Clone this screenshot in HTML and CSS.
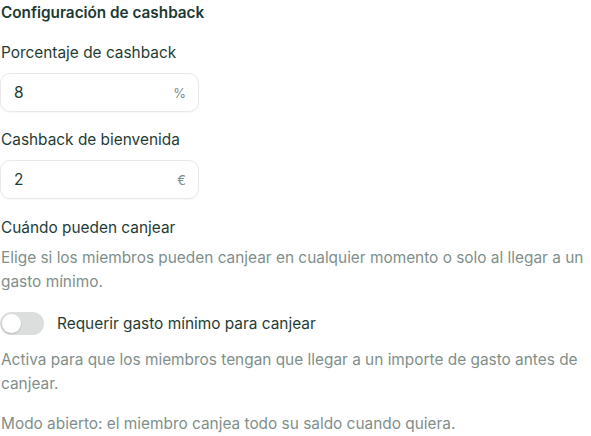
FILE: index.html
```html
<!DOCTYPE html>
<html lang="es">
<head>
<meta charset="utf-8">
<link rel="stylesheet" href="styles.css">
</head>
<body>
<div class="panel">
  <h2 class="title">Configuración de cashback</h2>
  <div class="field">
    <label class="label">Porcentaje de cashback</label>
    <div class="input"><span class="value">8</span><span class="suffix">%</span></div>
  </div>
  <div class="field">
    <label class="label">Cashback de bienvenida</label>
    <div class="input"><span class="value">2</span><span class="suffix">€</span></div>
  </div>
  <div class="section">
    <div class="label">Cuándo pueden canjear</div>
    <p class="desc">Elige si los miembros pueden canjear en cualquier momento o solo al llegar a un gasto mínimo.</p>
    <div class="toggle-row">
      <span class="toggle"><span class="knob"></span></span>
      <span class="toggle-label">Requerir gasto mínimo para canjear</span>
    </div>
    <p class="desc after-toggle">Activa para que los miembros tengan que llegar a un importe de gasto antes de canjear.</p>
    <p class="desc note">Modo abierto: el miembro canjea todo su saldo cuando quiera.</p>
  </div>
</div>
</body>
</html>
```
FILE: styles.css
```css
html, body {
  margin: 0;
  padding: 0;
  background: #ffffff;
}
body {
  font-family: Inter, "Noto Sans", sans-serif;
  color: #1f3d36;
  font-size: 15.4px;
}
.panel {
  width: 591px;
  padding: 0 0 0 1px;
  box-sizing: border-box;
}
.title {
  margin: 0;
  padding-top: 3px;
  font-size: 15.3px;
  font-weight: 600;
  line-height: 20px;
  color: #1c3a33;
}
.field {
  display: flex;
  flex-direction: column;
}
.label {
  display: block;
  font-size: 15.4px;
  line-height: 20px;
  color: #1f3d36;
}
.field .label {
  margin-top: 18px;
  margin-bottom: 10px;
}
.field:first-of-type .label {
  margin-top: 20px;
}
.input {
  width: 199px;
  height: 39px;
  box-sizing: border-box;
  margin-left: -1px;
  border: 1px solid #e6e9e8;
  border-radius: 10px;
  display: flex;
  align-items: center;
  justify-content: space-between;
  padding: 0 12px 0 13px;
  box-shadow: 0 1px 2px rgba(0,0,0,0.04);
}
.value {
  font-size: 15.4px;
  color: #1f3d36;
}
.suffix {
  font-size: 13px;
  color: #7d8c88;
}
.section {
  margin-top: 19px;
}
.desc {
  margin: 8px 0 0;
  font-size: 15.4px;
  line-height: 24px;
  color: #7f8f8b;
}
.toggle-row {
  display: flex;
  align-items: center;
  gap: 13px;
  margin-top: 18px;
  margin-left: -1px;
}
.toggle {
  width: 44px;
  height: 23px;
  border-radius: 12px;
  background: #dcdedd;
  position: relative;
  flex: none;
}
.knob {
  position: absolute;
  left: 2px;
  top: 2px;
  width: 19px;
  height: 19px;
  border-radius: 50%;
  background: #ffffff;
  box-shadow: 0 1px 2px rgba(0,0,0,0.15);
}
.toggle-label {
  font-size: 15.4px;
  color: #1f3d36;
}
.desc.after-toggle {
  margin-top: 13px;
}
.desc.note {
  margin-top: 16px;
}
```
